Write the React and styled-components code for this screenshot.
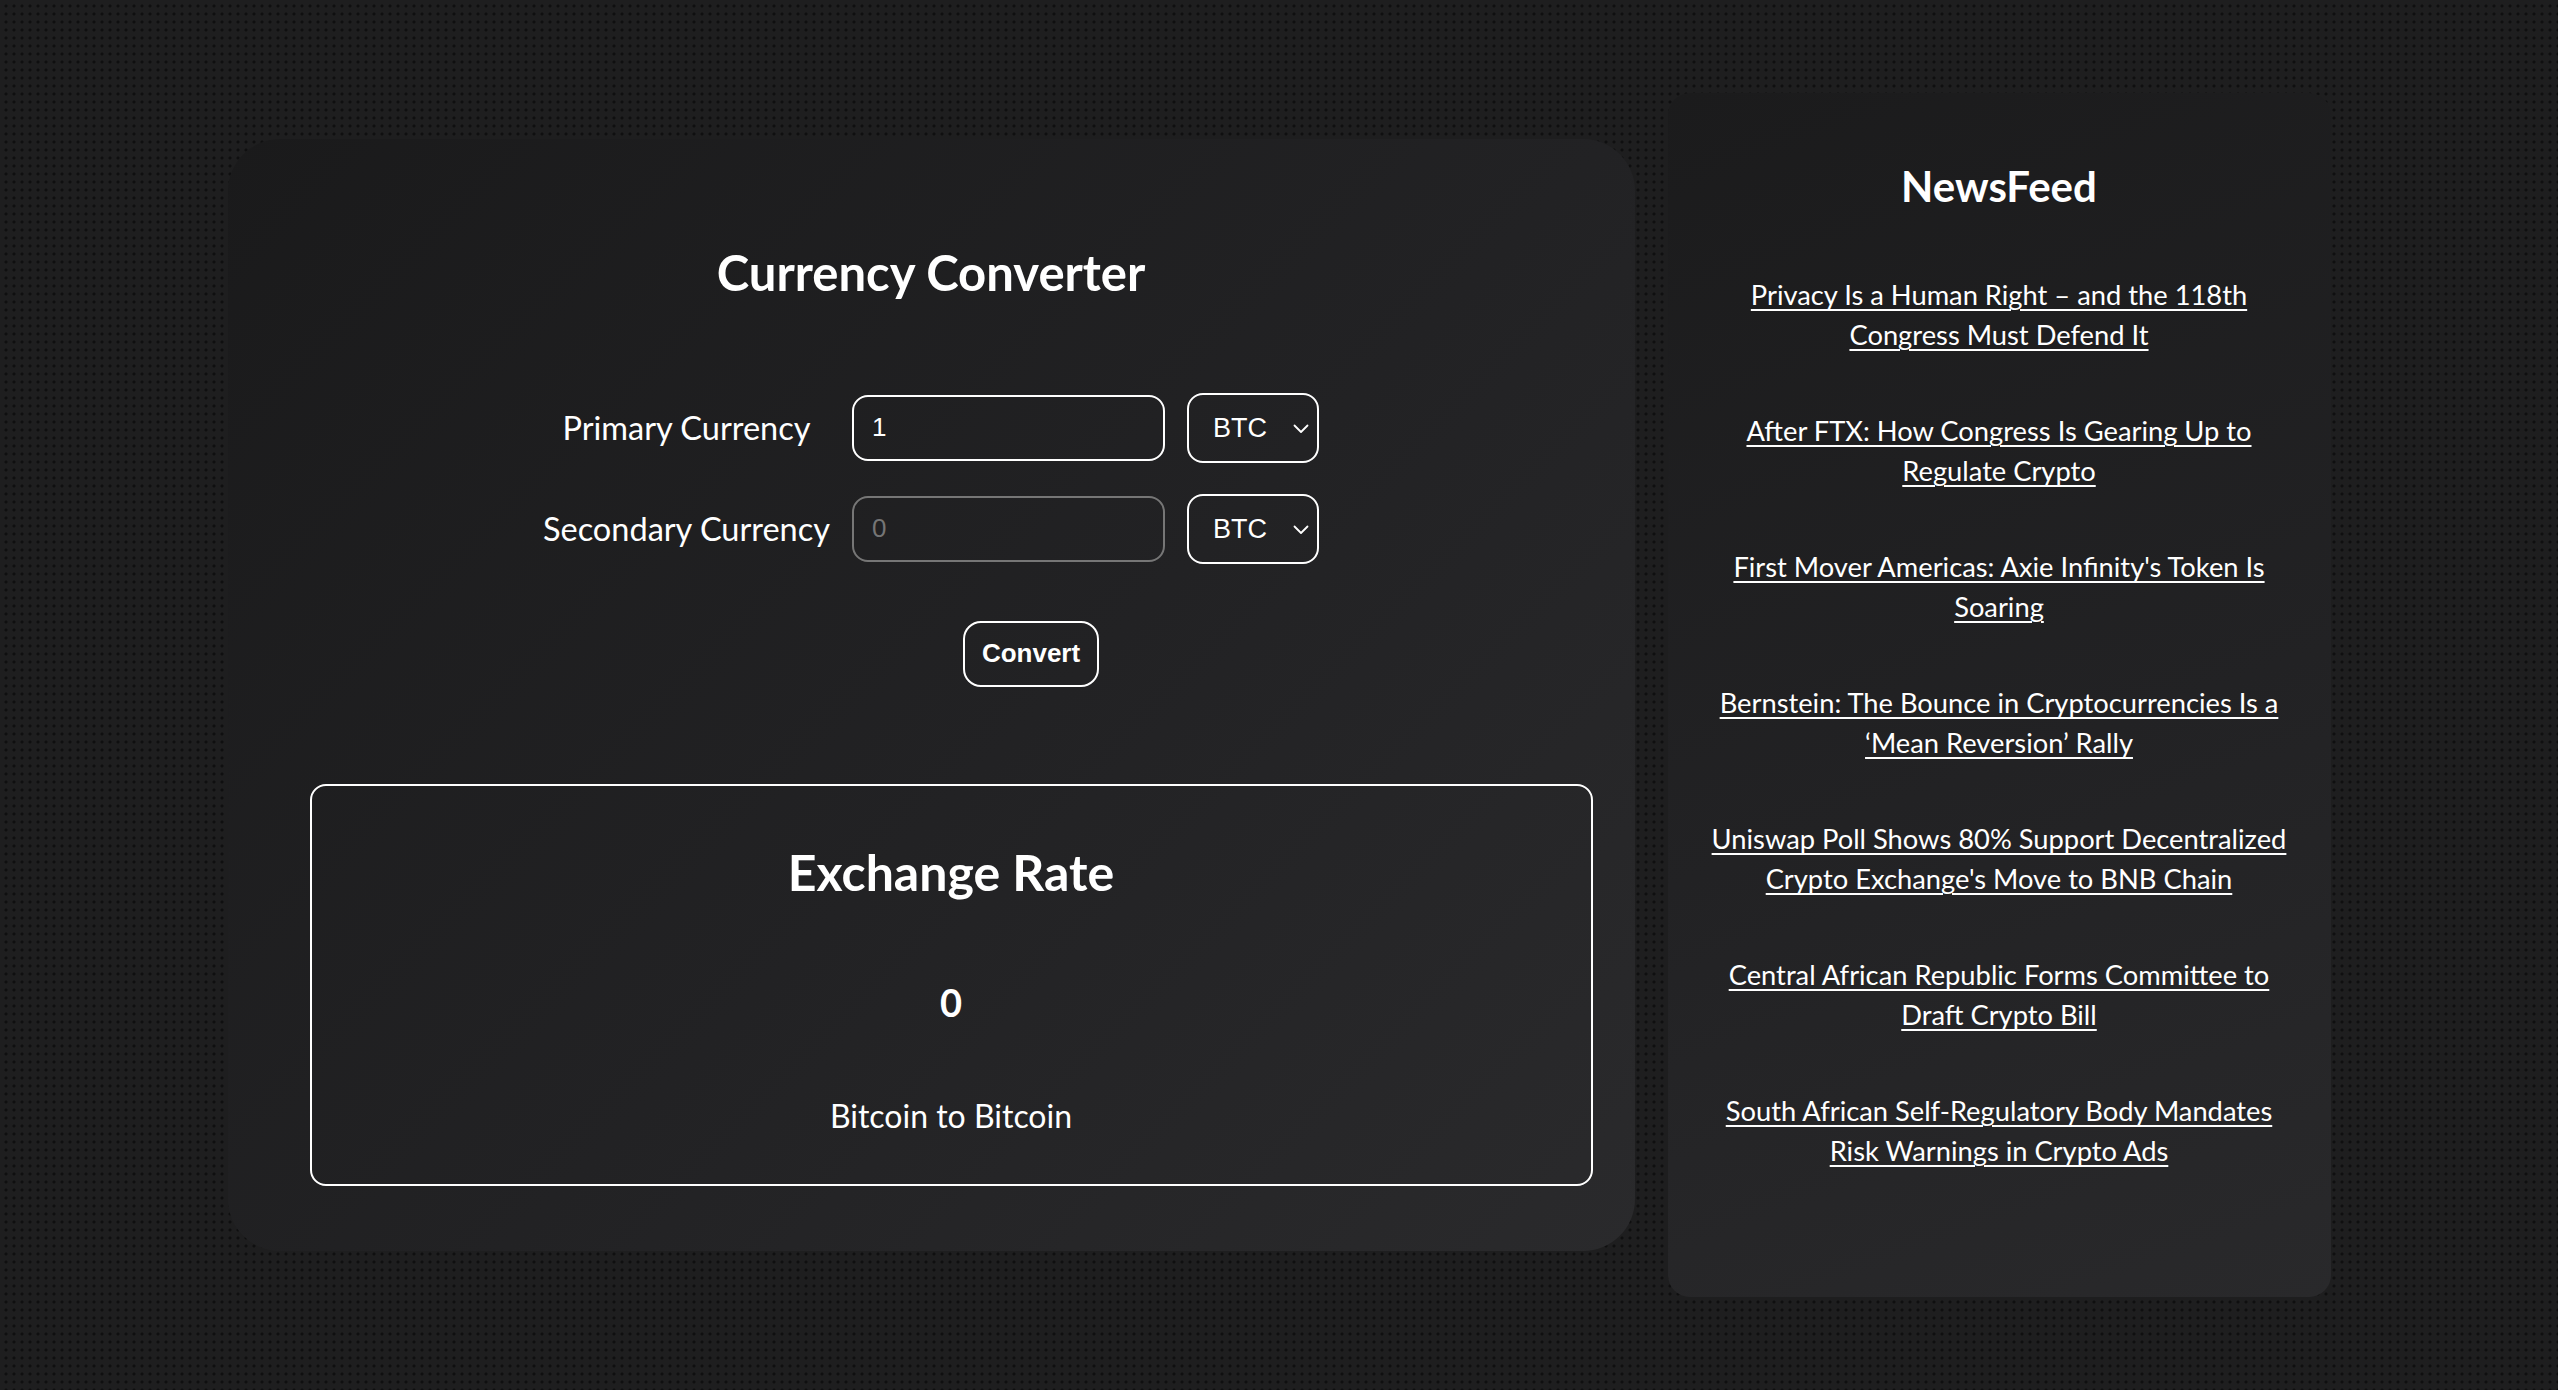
import React from "react";
import styled, { createGlobalStyle } from "styled-components";

const GlobalStyle = createGlobalStyle`
    html, body {
        margin: 0;
        padding: 0;
    }
    body {
        background-color: #1e1e1f;
        background-image: radial-gradient(#0f0f10 1.3px, transparent 1.8px);
        background-size: 8px 8px;
        background-position: 2px 2px;
        font-family: Lato, "Noto Sans", sans-serif;
        color: #fff;
    }
`;

const Page = styled.div`
    min-height: 100vh;
    display: flex;
    justify-content: center;
    align-items: center;
    gap: 33px;
`;

const ConverterPanel = styled.section`
    width: 1407px;
    box-sizing: border-box;
    padding: 104px 0 65px;
    border-radius: 52px;
    background: linear-gradient(135deg, #1a1a1b 0%, #222224 55%, #2a2a2c 100%);
    display: flex;
    flex-direction: column;
    align-items: center;
`;

const Title = styled.h2`
    margin: 0;
    font-size: ${p => p.size || 49}px;
    line-height: 1.2;
    font-weight: 700;
    text-align: center;
    color: #fff;
`;

const FormGrid = styled.div`
    margin-top: 91px;
    display: grid;
    grid-template-columns: auto 313px 132px;
    column-gap: 22px;
    row-gap: 31px;
    align-items: center;
`;

const Label = styled.label`
    font-size: 32.5px;
    text-align: center;
    color: #fff;
`;

const Input = styled.input`
    box-sizing: border-box;
    width: 100%;
    height: 66px;
    padding: 0 18px;
    border: 2px solid ${p => (p.disabled ? "#767676" : "#fff")};
    border-radius: 16px;
    background: transparent;
    color: #fff;
    font-family: "Liberation Sans", Arial, sans-serif;
    font-size: 26px;
    outline: none;
    ::placeholder {
        color: #777;
    }
`;

const SelectWrap = styled.div`
    position: relative;
    height: 70px;
    svg {
        position: absolute;
        right: 10px;
        top: 31px;
        pointer-events: none;
    }
`;

const Select = styled.select`
    appearance: none;
    box-sizing: border-box;
    width: 100%;
    height: 100%;
    padding: 0 0 0 24px;
    border: 2px solid #fff;
    border-radius: 16px;
    background: transparent;
    color: #fff;
    font-family: "Liberation Sans", Arial, sans-serif;
    font-size: 27px;
    outline: none;
`;

const ButtonRow = styled.div`
    margin-top: 57px;
    margin-left: 200px;
`;

const ConvertButton = styled.button`
    box-sizing: border-box;
    height: 66px;
    padding: 0 17px;
    border: 2px solid #fff;
    border-radius: 18px;
    background: transparent;
    color: #fff;
    font-family: "Liberation Sans", Arial, sans-serif;
    font-weight: 700;
    font-size: 26px;
    cursor: pointer;
`;

const RateBox = styled.div`
    align-self: stretch;
    margin: 97px 42px 0 82px;
    box-sizing: border-box;
    height: 402px;
    padding-top: 56px;
    border: 2px solid #fff;
    border-radius: 16px;
    display: flex;
    flex-direction: column;
    align-items: center;
`;

const RateValue = styled.div`
    margin-top: 77px;
    font-size: 38px;
    line-height: 46px;
    font-weight: 700;
`;

const RateCaption = styled.div`
    margin-top: 72px;
    font-size: 32px;
    line-height: 38px;
`;

const NewsPanel = styled.aside`
    width: 663px;
    box-sizing: border-box;
    padding: 68px 38px 126px;
    border-radius: 22px;
    background: linear-gradient(160deg, #1b1b1c 0%, #222224 55%, #29292b 100%);
    display: flex;
    flex-direction: column;
    align-items: center;
`;

const NewsList = styled.div`
    margin-top: 64px;
    display: flex;
    flex-direction: column;
    gap: 56px;
`;

const NewsLink = styled.a`
    display: block;
    font-size: 27.3px;
    line-height: 40px;
    text-align: center;
    color: #fff;
    text-decoration: underline;
    text-underline-offset: 4px;
    text-decoration-thickness: 2px;
`;

const headlines = [
    "Privacy Is a Human Right – and the 118th Congress Must Defend It",
    "After FTX: How Congress Is Gearing Up to Regulate Crypto",
    "First Mover Americas: Axie Infinity's Token Is Soaring",
    "Bernstein: The Bounce in Cryptocurrencies Is a ‘Mean Reversion’ Rally",
    "Uniswap Poll Shows 80% Support Decentralized Crypto Exchange's Move to BNB Chain",
    "Central African Republic Forms Committee to Draft Crypto Bill",
    "South African Self-Regulatory Body Mandates Risk Warnings in Crypto Ads",
];

const Chevron = () => (
    <svg width="16" height="10" viewBox="0 0 16 10" fill="none">
        <polyline points="1.5,1.5 8,8 14.5,1.5" stroke="#fff" strokeWidth="1.8" strokeLinecap="round" strokeLinejoin="round" />
    </svg>
);

const CurrencySelect = ({ id }) => (
    <SelectWrap>
        <Select id={id} defaultValue="BTC">
            <option value="BTC">BTC</option>
            <option value="ETH">ETH</option>
            <option value="USD">USD</option>
        </Select>
        <Chevron />
    </SelectWrap>
);

export default function App() {
    return (
        <>
            <GlobalStyle />
            <Page>
                <ConverterPanel>
                    <Title>Currency Converter</Title>
                    <FormGrid>
                        <Label htmlFor="primary">Primary Currency</Label>
                        <Input id="primary" type="number" defaultValue="1" />
                        <CurrencySelect id="primary-currency" />
                        <Label htmlFor="secondary">Secondary Currency</Label>
                        <Input id="secondary" type="number" placeholder="0" disabled />
                        <CurrencySelect id="secondary-currency" />
                    </FormGrid>
                    <ButtonRow>
                        <ConvertButton>Convert</ConvertButton>
                    </ButtonRow>
                    <RateBox>
                        <Title size={50}>Exchange Rate</Title>
                        <RateValue>0</RateValue>
                        <RateCaption>Bitcoin to Bitcoin</RateCaption>
                    </RateBox>
                </ConverterPanel>
                <NewsPanel>
                    <Title size={42}>NewsFeed</Title>
                    <NewsList>
                        {headlines.map(h => (
                            <NewsLink key={h} href="#">
                                {h}
                            </NewsLink>
                        ))}
                    </NewsList>
                </NewsPanel>
            </Page>
        </>
    );
}
